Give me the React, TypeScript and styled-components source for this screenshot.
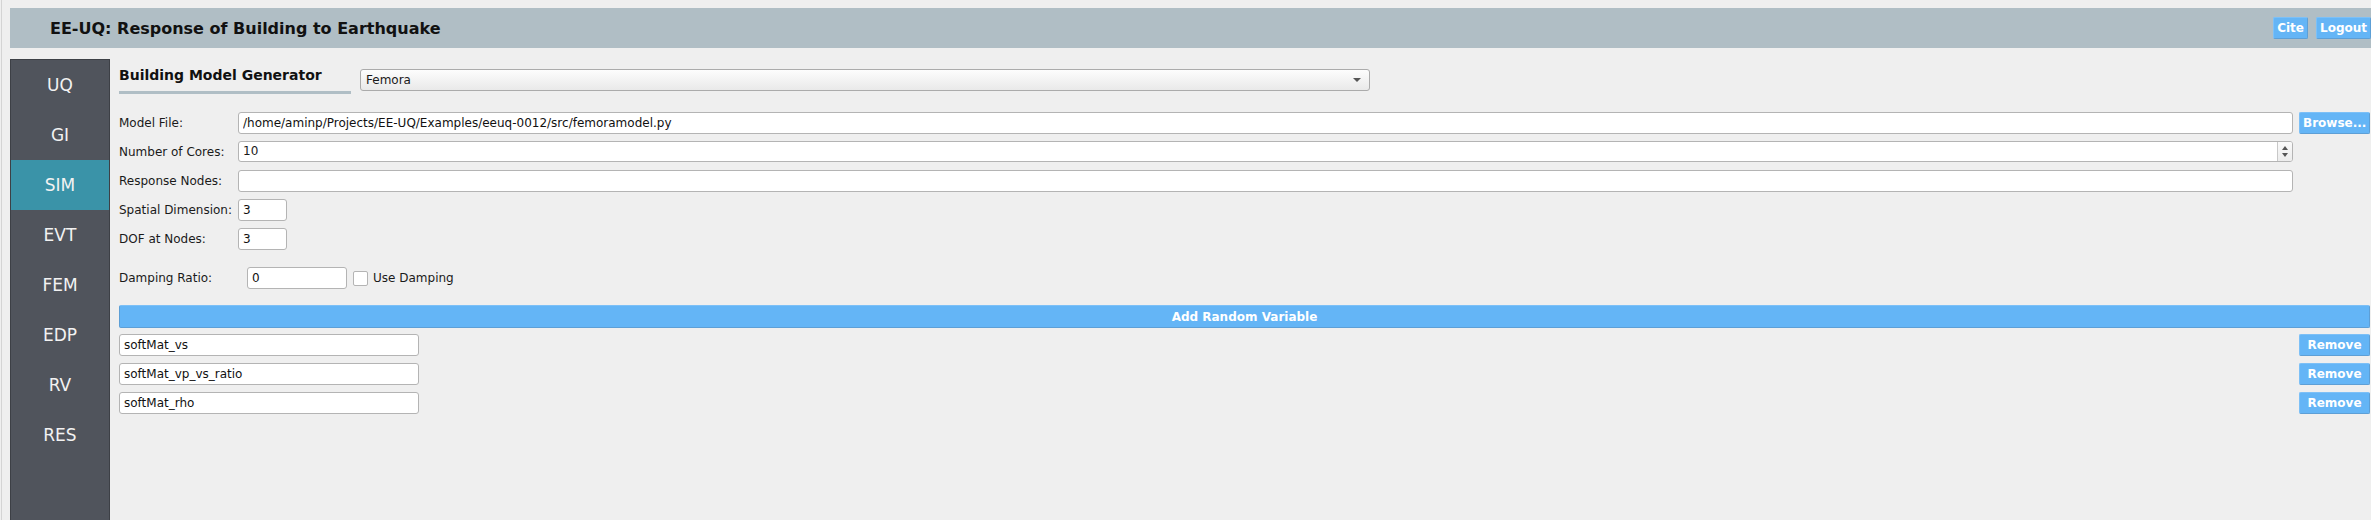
import * as React from 'react';
import styled, { createGlobalStyle } from 'styled-components';

const GlobalStyle = createGlobalStyle`
  html, body {
    margin: 0;
    padding: 0;
    background: #efefef;
  }
  body {
    font-family: "DejaVu Sans", "Noto Sans", sans-serif;
    font-size: 12px;
    color: #1a1a1a;
  }
`;

const Page = styled.div`
  display: flex;
  flex-direction: column;
  min-height: 520px;
  margin-left: 1px;
  border-left: 1px solid #d4d4d4;
  padding: 8px 0 0 8px;
  box-sizing: border-box;
`;

const Header = styled.header`
  display: flex;
  align-items: center;
  justify-content: space-between;
  height: 40px;
  background: #b0bec5;
  padding: 0 0 0 40px;
`;

const AppTitle = styled.h1`
  margin: 0;
  font-size: 16px;
  font-weight: bold;
  color: #111;
`;

const HeaderButtons = styled.div`
  display: flex;
  gap: 8px;
`;

const BlueButton = styled.button<{ $wide?: boolean }>`
  height: 22px;
  width: ${p => (p.$wide ? '71px' : 'auto')};
  padding: 0 3px;
  border: 1px solid #5d9fd6;
  border-top-color: #7cc0f7;
  border-left-color: #7cc0f7;
  border-radius: 2px;
  background: #64b5f6;
  color: #fff;
  font-family: "DejaVu Sans", sans-serif;
  font-size: 12px;
  font-weight: bold;
  line-height: 20px;
  white-space: nowrap;
`;

const Main = styled.div`
  flex: 1;
  display: flex;
  margin-top: 11px;
  gap: 9px;
`;

const Nav = styled.nav`
  width: 100px;
  box-sizing: border-box;
  background: #50545c;
  border: 1px solid #3d4046;
  border-bottom: none;
  display: flex;
  flex-direction: column;
`;

const NavItem = styled.div<{ $active?: boolean }>`
  height: 50px;
  display: flex;
  align-items: center;
  justify-content: center;
  font-size: 17px;
  color: #f2f2f2;
  background: ${p => (p.$active ? '#3a93a8' : 'transparent')};
`;

const Content = styled.div`
  flex: 1;
  display: flex;
  flex-direction: column;
  padding: 8px 1px 0 0;
`;

const TopRow = styled.div`
  display: flex;
  align-items: flex-start;
  gap: 9px;
  margin-bottom: 18px;
`;

const SectionTitle = styled.div`
  width: 232px;
  font-size: 14px;
  font-weight: bold;
  line-height: 17px;
  padding-bottom: 7px;
  border-bottom: 3px solid #b0bec5;
  color: #111;
`;

const Select = styled.div`
  margin-top: 2px;
  width: 1010px;
  height: 22px;
  box-sizing: border-box;
  display: flex;
  align-items: center;
  justify-content: space-between;
  padding: 0 8px 0 5px;
  border: 1px solid #ababab;
  border-radius: 3px;
  background: linear-gradient(#fdfdfd, #e9e9e9);
  font-size: 12px;
`;

const Caret = styled.span`
  width: 0;
  height: 0;
  border-left: 4px solid transparent;
  border-right: 4px solid transparent;
  border-top: 4px solid #555;
`;

const FormRow = styled.div<{ $gap?: number }>`
  display: flex;
  align-items: center;
  gap: 6px;
  margin-bottom: ${p => p.$gap ?? 7}px;
`;

const Label = styled.span<{ $width?: number }>`
  width: ${p => p.$width ?? 113}px;
  flex-shrink: 0;
  white-space: nowrap;
`;

const Field = styled.input<{ $width?: number }>`
  ${p => (p.$width ? `width: ${p.$width}px;` : 'flex: 1; min-width: 0;')}
  height: 22px;
  box-sizing: border-box;
  padding: 0 4px;
  border: 1px solid #b4b4b4;
  border-radius: 3px;
  background: #fff;
  font-family: "DejaVu Sans", sans-serif;
  font-size: 12px;
  color: #111;
  outline: none;
`;

const Spin = styled.div`
  flex: 1;
  display: flex;
  height: 21px;
  box-sizing: border-box;
  border: 1px solid #b4b4b4;
  border-radius: 3px;
  background: #fff;
  overflow: hidden;
`;

const SpinText = styled.span`
  flex: 1;
  padding: 0 4px;
  line-height: 19px;
`;

const SpinArrows = styled.div`
  width: 14px;
  border-left: 1px solid #c8c8c8;
  background: linear-gradient(#fafafa, #ececec);
  display: flex;
  flex-direction: column;
  align-items: center;
  justify-content: center;
  gap: 3px;
`;

const Arrow = styled.span<{ $up?: boolean }>`
  width: 0;
  height: 0;
  border-left: 3.5px solid transparent;
  border-right: 3.5px solid transparent;
  ${p => (p.$up ? 'border-bottom: 4px solid #555;' : 'border-top: 4px solid #555;')}
`;

const Spacer = styled.span`
  width: 71px;
  flex-shrink: 0;
`;

const Check = styled.span`
  width: 13px;
  height: 13px;
  border: 1px solid #b4b4b4;
  border-radius: 2px;
  background: #fff;
`;

const CheckLabel = styled.span`
  margin-left: -1px;
`;

const AddBar = styled.button`
  height: 23px;
  margin-bottom: 6px;
  border: 1px solid #5d9fd6;
  border-top-color: #7cc0f7;
  border-radius: 2px;
  background: #64b5f6;
  color: #fff;
  font-family: "DejaVu Sans", sans-serif;
  font-size: 12px;
  font-weight: bold;
`;

const RvRow = styled.div`
  display: flex;
  align-items: center;
  justify-content: space-between;
  margin-bottom: 7px;
`;

const navItems = ['UQ', 'GI', 'SIM', 'EVT', 'FEM', 'EDP', 'RV', 'RES'];
const randomVars = ['softMat_vs', 'softMat_vp_vs_ratio', 'softMat_rho'];

export default function App() {
  return (
    <>
      <GlobalStyle />
      <Page>
        <Header>
          <AppTitle>EE-UQ: Response of Building to Earthquake</AppTitle>
          <HeaderButtons>
            <BlueButton>Cite</BlueButton>
            <BlueButton>Logout</BlueButton>
          </HeaderButtons>
        </Header>
        <Main>
          <Nav>
            {navItems.map(n => (
              <NavItem key={n} $active={n === 'SIM'}>{n}</NavItem>
            ))}
          </Nav>
          <Content>
            <TopRow>
              <SectionTitle>Building Model Generator</SectionTitle>
              <Select>
                <span>Femora</span>
                <Caret />
              </Select>
            </TopRow>
            <FormRow>
              <Label>Model File:</Label>
              <Field readOnly value="/home/aminp/Projects/EE-UQ/Examples/eeuq-0012/src/femoramodel.py" />
              <BlueButton $wide>Browse...</BlueButton>
            </FormRow>
            <FormRow $gap={8}>
              <Label>Number of Cores:</Label>
              <Spin>
                <SpinText>10</SpinText>
                <SpinArrows>
                  <Arrow $up />
                  <Arrow />
                </SpinArrows>
              </Spin>
              <Spacer />
            </FormRow>
            <FormRow>
              <Label>Response Nodes:</Label>
              <Field readOnly value="" />
              <Spacer />
            </FormRow>
            <FormRow>
              <Label>Spatial Dimension:</Label>
              <Field readOnly value="3" $width={49} />
            </FormRow>
            <FormRow $gap={17}>
              <Label>DOF at Nodes:</Label>
              <Field readOnly value="3" $width={49} />
            </FormRow>
            <FormRow $gap={16}>
              <Label $width={122}>Damping Ratio:</Label>
              <Field readOnly value="0" $width={100} />
              <Check />
              <CheckLabel>Use Damping</CheckLabel>
            </FormRow>
            <AddBar>Add Random Variable</AddBar>
            {randomVars.map(v => (
              <RvRow key={v}>
                <Field readOnly value={v} $width={300} />
                <BlueButton $wide>Remove</BlueButton>
              </RvRow>
            ))}
          </Content>
        </Main>
      </Page>
    </>
  );
}
